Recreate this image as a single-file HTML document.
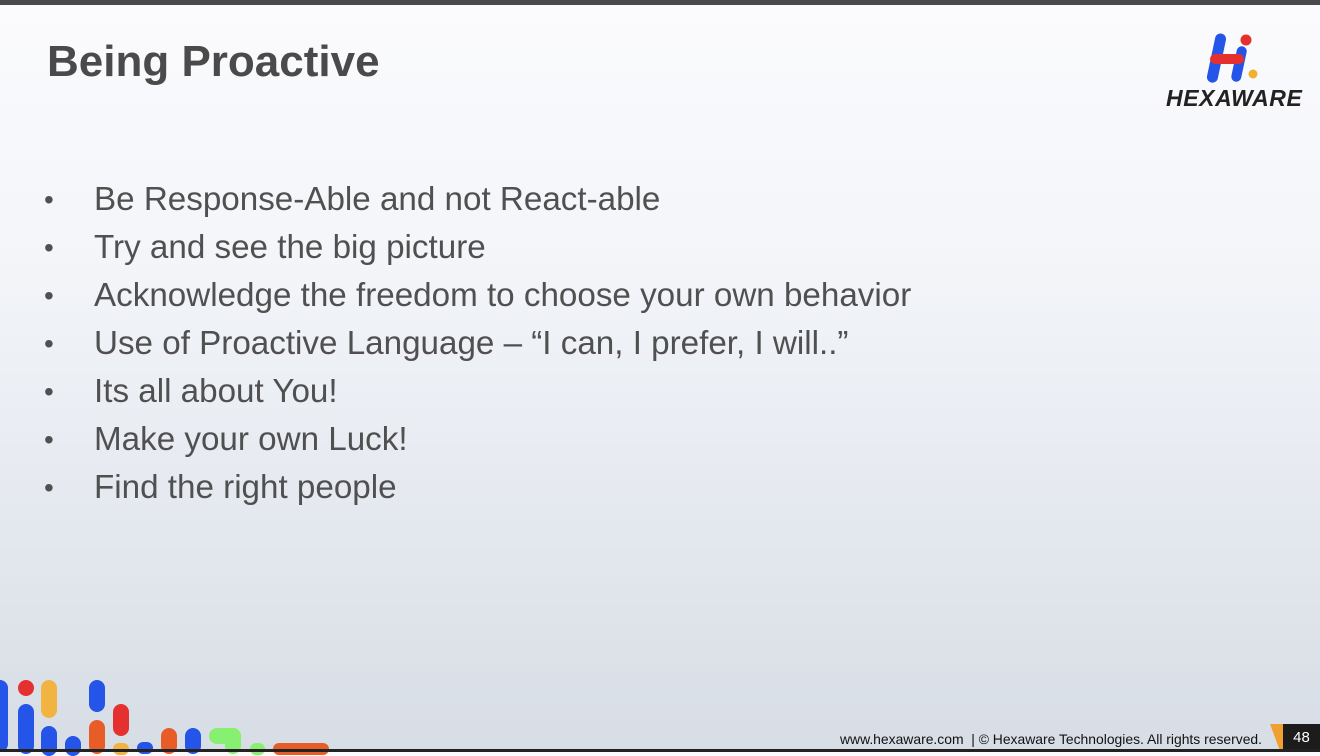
<!DOCTYPE html>
<html><head><style>
body{margin:0;width:1320px;height:752px;overflow:hidden;position:relative;font-family:"Liberation Sans",sans-serif;
background:linear-gradient(180deg,#fbfbfd 0%,#f3f5f9 35%,#e6eaf0 65%,#d7dde5 100%);}
.top{position:absolute;left:0;top:0;width:1320px;height:5px;background:#4a4a4a;}
.bot{position:absolute;left:0;top:749px;width:1320px;height:3px;background:#222;}
h1{position:absolute;left:47px;top:37px;margin:0;font-size:44px;font-weight:bold;color:#4a4a4a;}
ul{position:absolute;left:44px;top:176px;margin:0;padding:0;list-style:none;}
li{font-size:33.2px;color:#505050;height:48px;line-height:48px;position:relative;padding-left:50px;}
li:before{content:"•";position:absolute;left:0;font-size:28px;}
.s{position:absolute;border-radius:8px;}
.foot{position:absolute;left:840px;top:731px;font-size:13.9px;color:#111;}
.pg{position:absolute;left:1283px;top:724px;width:37px;height:26px;background:#1c1c1c;color:#fff;font-size:15px;text-align:center;line-height:28px;}
.og{position:absolute;left:1270px;top:724px;width:16px;height:26px;background:#f0a030;clip-path:polygon(0 0,100% 0,100% 100%,60% 100%);}
</style></head><body>
<div class="top"></div>
<h1>Being Proactive</h1>
<svg style="position:absolute;left:1160px;top:28px" width="150" height="84">
<rect x="51" y="5" width="11" height="50" rx="5.5" fill="#2454e8" transform="rotate(12 56 30)"/>
<rect x="74" y="18" width="10" height="36" rx="5" fill="#2454e8" transform="rotate(12 79 36)"/>
<rect x="50" y="26" width="34" height="10" rx="5" fill="#e53030"/>
<circle cx="86" cy="12" r="5.5" fill="#e53030"/>
<circle cx="93" cy="46" r="4.5" fill="#f0b030"/>
<text x="6" y="78" font-family="Liberation Sans" font-weight="bold" font-style="italic" font-size="23" letter-spacing="0.6" fill="#222">HEXAWARE</text>
</svg>
<ul>
<li>Be Response-Able and not React-able</li>
<li>Try and see the big picture</li>
<li>Acknowledge the freedom to choose your own behavior</li>
<li>Use of Proactive Language – “I can, I prefer, I will..”</li>
<li>Its all about You!</li>
<li>Make your own Luck!</li>
<li>Find the right people</li>
</ul>
<div class="s" style="left:0;top:680px;width:8px;height:72px;background:#2454e8;border-radius:0 8px 8px 0"></div>
<div class="s" style="left:18px;top:680px;width:16px;height:16px;background:#e53030"></div>
<div class="s" style="left:41px;top:680px;width:16px;height:38px;background:#f2b440"></div>
<div class="s" style="left:18px;top:704px;width:16px;height:50px;background:#2454e8"></div>
<div class="s" style="left:41px;top:726px;width:16px;height:30px;background:#2454e8"></div>
<div class="s" style="left:65px;top:736px;width:16px;height:20px;background:#2454e8"></div>
<div class="s" style="left:89px;top:680px;width:16px;height:32px;background:#2454e8"></div>
<div class="s" style="left:89px;top:720px;width:16px;height:34px;background:#e85c28"></div>
<div class="s" style="left:113px;top:704px;width:16px;height:32px;background:#e53030"></div>
<div class="s" style="left:113px;top:743px;width:16px;height:12px;background:#f2b440"></div>
<div class="s" style="left:137px;top:742px;width:16px;height:12px;background:#2454e8"></div>
<div class="s" style="left:161px;top:728px;width:16px;height:26px;background:#e85c28"></div>
<div class="s" style="left:185px;top:728px;width:16px;height:26px;background:#2454e8"></div>
<div class="s" style="left:209px;top:728px;width:32px;height:16px;background:#88f070"></div>
<div class="s" style="left:225px;top:728px;width:16px;height:26px;background:#88f070"></div>
<div class="s" style="left:250px;top:743px;width:15px;height:12px;background:#88f070"></div>
<div class="s" style="left:273px;top:743px;width:56px;height:12px;background:#e85c28"></div>
<div class="foot">www.hexaware.com &nbsp;| © Hexaware Technologies. All rights reserved.</div>
<div class="og"></div>
<div class="pg">48</div>
<div class="bot"></div>
</body></html>
